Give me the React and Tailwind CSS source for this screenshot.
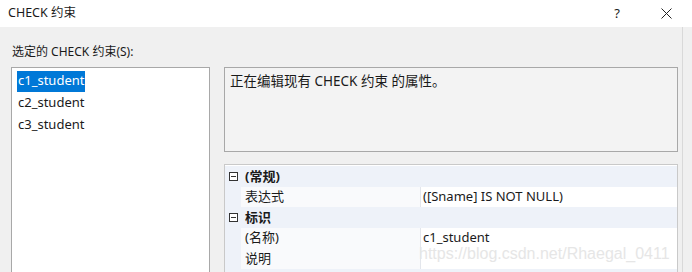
import React from 'react';

const font = { fontFamily: '"Noto Sans", "Noto Sans CJK SC", sans-serif' };

const MinusBox = () => (
    <svg width="9" height="9" viewBox="0 0 9 9" className="shrink-0">
        <rect x="0.5" y="0.5" width="8" height="8" fill="white" stroke="#333" />
        <line x1="2" y1="4.5" x2="7" y2="4.5" stroke="#333" />
    </svg>
);

const CategoryRow = ({ label }) => (
    <div className="h-[20.5px] flex items-center bg-[#eef2f9] pl-[4px]">
        <MinusBox />
        <span className="ml-[7px] font-bold">{label}</span>
    </div>
);

const PropRow = ({ name, value }) => (
    <div className="h-[20.5px] flex">
        <div className="w-[16px] bg-[#eef2f9]" />
        <div className="w-[180px] flex items-center pl-[4px] bg-[#f9fafc] border-r border-[#e3e6ec]">{name}</div>
        <div className="flex-1 flex items-center pl-[2px] bg-white">{value}</div>
    </div>
);

const App = () => {
    const items = ['c1_student', 'c2_student', 'c3_student'];

    return (
        <div className="w-[692px] h-[272px] overflow-hidden bg-[#f0f0f0] text-[12px] text-[#1a1a1a] relative" style={font}>
            {/* title bar */}
            <div className="h-[27px] bg-white flex items-center pl-[8px] pr-[20px]">
                <span className="text-[12.5px]">CHECK 约束</span>
                <span className="ml-auto text-[13px] mr-[41px]">?</span>
                <svg width="11" height="11" viewBox="0 0 11 11">
                    <path d="M0.5 0.5 L10.5 10.5 M10.5 0.5 L0.5 10.5" stroke="#222" strokeWidth="1" />
                </svg>
            </div>

            <div className="flex border-r border-[#d9d9d9] mr-[9px] h-[245px]">
                {/* left column */}
                <div className="w-[224px] pl-[11px] shrink-0">
                    <div className="h-[40px] flex items-center pl-[1px] pt-[10px]">选定的 CHECK 约束(S):</div>
                    <div className="w-[199px] h-[210px] bg-white border border-[#a8a8a8] pt-[2px] pl-[5px] text-[13px]">
                        {items.map((it, i) => (
                            <div key={it} className="h-[22px] flex items-center">
                                <span className={i === 0 ? 'bg-[#0078d7] text-white px-[1px] h-[21px] flex items-center' : 'px-[1px]'}>{it}</span>
                            </div>
                        ))}
                    </div>
                </div>

                {/* right column */}
                <div className="w-[454px] pt-[40px] shrink-0 text-[13px]">
                    <div className="h-[85px] bg-[#f3f3f3] border border-[#a8a8a8] pl-[5px] pt-[3px] text-[13.5px]">
                        正在编辑现有 CHECK 约束 的属性。
                    </div>
                    <div className="mt-[12px] h-[120px] bg-white border border-[#c9c9c9] pt-[1px]">
                        <CategoryRow label="(常规)" />
                        <PropRow name="表达式" value="([Sname] IS NOT NULL)" />
                        <CategoryRow label="标识" />
                        <PropRow name="(名称)" value="c1_student" />
                        <PropRow name="说明" value="" />
                        <CategoryRow label="表设计器" />
                    </div>
                </div>
            </div>

            {/* watermark */}
            <div className="absolute left-[419px] top-[242px] text-[16px] text-[#e6e6e6]" style={{ fontFamily: '"Liberation Sans", sans-serif' }}>
                https://blog.csdn.net/Rhaegal_0411
            </div>
        </div>
    );
};

export default App;
